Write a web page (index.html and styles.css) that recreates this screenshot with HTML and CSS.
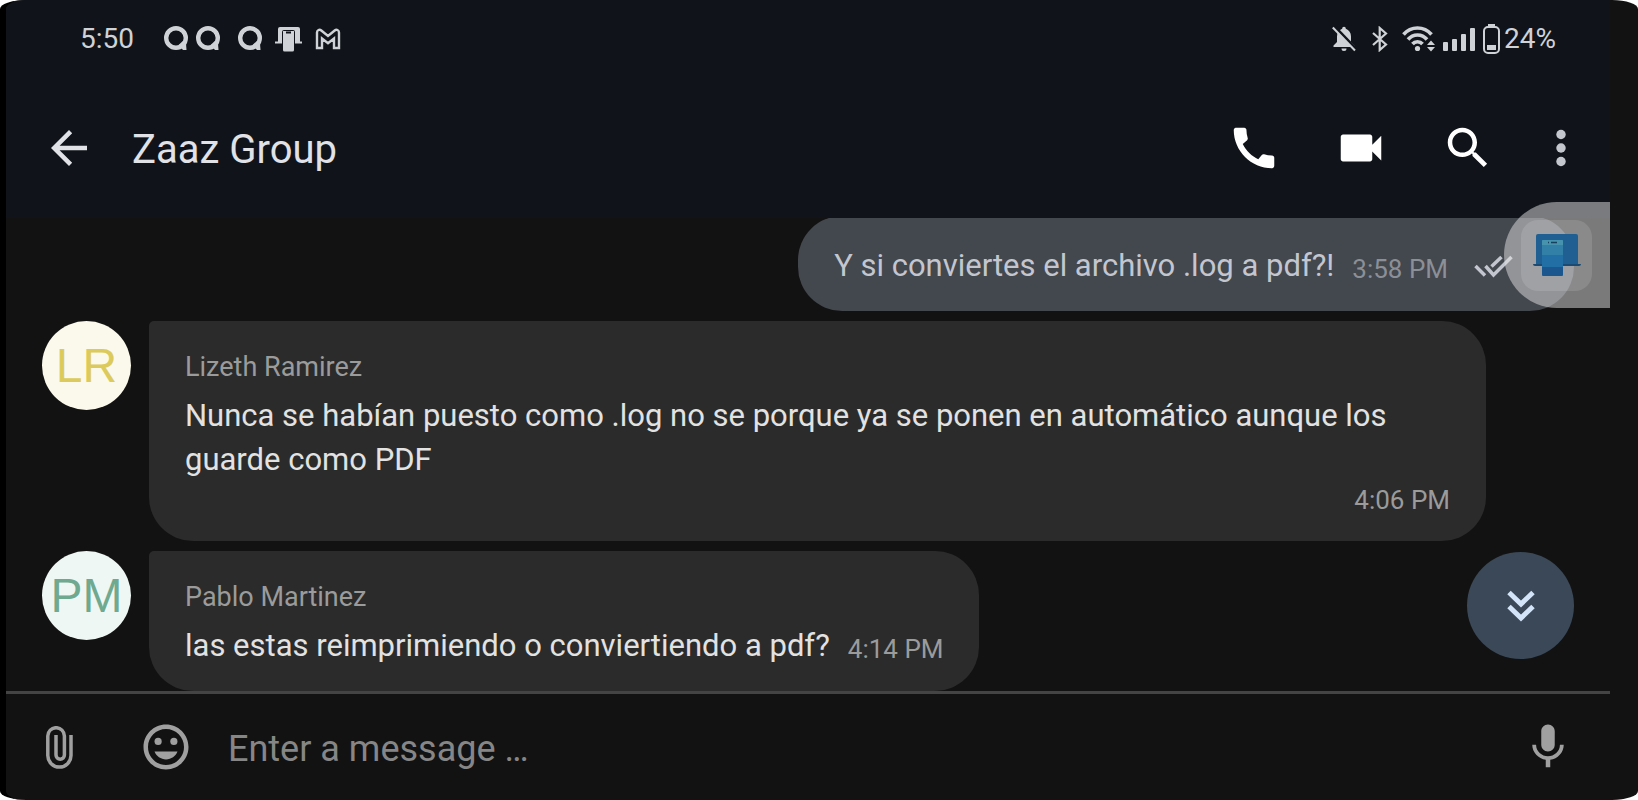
FILE: index.html
```html
<!DOCTYPE html>
<html lang="es">
<head>
    <meta charset="UTF-8">
    <meta name="viewport" content="width=device-width, initial-scale=1.0">
    <title>Zaaz Group</title>
    <link rel="stylesheet" href="styles.css">
</head>
<body>
    <div class="screen">
        <!-- Phone status bar -->
        <div class="status-bar">
            <span class="clock">5:50</span>
            <div class="notifications">
                <svg width="24" height="25" viewBox="0 0 24 25"><circle cx="12" cy="12" r="9.8" fill="none" stroke="currentColor" stroke-width="4.4"/><path d="M14.5 19l5-4.500 2.500 3 .5 6.500h-3.500z" fill="currentColor"/></svg>
                <svg width="24" height="25" viewBox="0 0 24 25"><circle cx="12" cy="12" r="9.8" fill="none" stroke="currentColor" stroke-width="4.4"/><path d="M14.5 19l5-4.500 2.500 3 .5 6.500h-3.500z" fill="currentColor"/></svg>
                <svg class="spaced" width="24" height="25" viewBox="0 0 24 25"><circle cx="12" cy="12" r="9.8" fill="none" stroke="currentColor" stroke-width="4.4"/><path d="M14.5 19l5-4.500 2.500 3 .5 6.500h-3.500z" fill="currentColor"/></svg>
                <svg class="link-icon" width="27" height="26" viewBox="0 0 27 26" fill="currentColor"><path d="M3 3a2 2 0 0 1 2-2h18a2 2 0 0 1 2 2v12.500h2v2h-7V6a2 2 0 0 0-2-2H9a2 2 0 0 0-2 2v11.500H0v-2h3z"/><path d="M8 5h11v19a1.500 1.500 0 0 1-1.500 1.500h-8A1.500 1.500 0 0 1 8 24z"/><path class="notch" d="M11 6.500h5"/></svg>
                <svg class="mail-icon" width="26" height="22" viewBox="0 0 26 22"><path d="M2 20V4.500C2 2 4.500 1 6.300 2.500L13 8l6.700-5.500C21.500 1 24 2 24 4.500V20h-5V10.500l-6 4.800-6-4.800V20z" fill="none" stroke="currentColor" stroke-width="2.4"/></svg>
            </div>
            <div class="system-icons">
                <svg width="24" height="26" viewBox="0 0 24 26"><path d="M12 .8c-1.200 0-1.800.8-1.800 2C7 4 5 6.700 5 10.500V16l-3.500 3.500V21h21v-1.500L19 16v-5.500c0-3.800-2-6.500-5.200-7.700 0-1.200-.6-2-1.800-2z" fill="currentColor"/><path d="M9.500 22.500h5a2.500 2.500 0 0 1-5 0z" fill="currentColor"/><path class="slash-gap" d="M2 0l22 23"/><path d="M.8 1.500L23 24.500" stroke="currentColor" stroke-width="2"/></svg>
                <svg class="bluetooth" width="16" height="26" viewBox="0 0 16 26"><path d="M1 7l13 11.500-6.300 5.500V2L14 7.500 1 19" fill="none" stroke="currentColor" stroke-width="2.200"/></svg>
                <svg class="wifi" width="34" height="26" viewBox="0 0 34 26"><g fill="none" stroke="currentColor" stroke-width="3.600"><path d="M1.500 8.500C9-.2 22-.2 29.500 8.500"/><path d="M6 13.500c5-6 14-6 19 0"/><path d="M10.500 18c2.500-3 7.500-3 10 0"/></g><circle cx="15.500" cy="22.500" r="2.600" fill="currentColor"/><path d="M29 14.500l4 4.500h-8zM29 25.500l4-4.500h-8z" fill="currentColor"/></svg>
                <svg class="signal" width="33" height="24" viewBox="0 0 33 24" fill="currentColor"><rect x="0" y="15" width="5" height="9" rx="1"/><rect x="9" y="12" width="5" height="12" rx="1"/><rect x="18" y="7" width="5" height="17" rx="1"/><rect x="27" y="1" width="5" height="23" rx="1"/></svg>
                <svg class="battery" width="17" height="30" viewBox="0 0 17 30"><rect x="5" y="0" width="7" height="2" fill="currentColor"/><rect x="1" y="3" width="15" height="26" rx="4" fill="none" stroke="currentColor" stroke-width="2"/><rect x="4" y="21" width="9" height="5" fill="currentColor"/></svg>
                <span>24%</span>
            </div>
        </div>

        <header class="app-bar">
            <button type="button" aria-label="Back"><svg class="icon" viewBox="0 0 24 24"><path d="M20 11H7.830l5.590-5.590L12 4l-8 8 8 8 1.410-1.410L7.830 13H20v-2z"/></svg></button>
            <h1>Zaaz Group</h1>
            <div class="actions">
                <button type="button" aria-label="Call"><svg class="icon" viewBox="0 0 24 24"><path d="M20.010 15.380c-1.230 0-2.420-.2-3.530-.56-.35-.12-.74-.03-1.010.24l-1.570 1.970c-2.830-1.350-5.480-3.900-6.890-6.830l1.950-1.660c.27-.28.35-.67.24-1.020-.37-1.110-.56-2.300-.56-3.530 0-.54-.45-.99-.99-.99H4.190C3.650 3 3 3.240 3 3.990 3 13.280 10.730 21 20.010 21c.71 0 .99-.63.99-1.180v-3.450c0-.54-.45-.99-.99-.99z"/></svg></button>
                <button type="button" aria-label="Video call"><svg class="icon" viewBox="0 0 24 24"><path d="M17 10.500V7c0-.55-.45-1-1-1H4c-.55 0-1 .45-1 1v10c0 .55.45 1 1 1h12c.55 0 1-.45 1-1v-3.500l4 4v-11l-4 4z"/></svg></button>
                <button type="button" aria-label="Search"><svg class="icon" viewBox="0 0 24 24"><path d="M15.500 14h-.79l-.28-.27C15.410 12.590 16 11.110 16 9.500 16 5.910 13.090 3 9.500 3S3 5.910 3 9.500 5.910 16 9.500 16c1.610 0 3.090-.59 4.230-1.570l.27.28v.79l5 4.990L20.490 19l-4.990-5zm-6 0C7.010 14 5 11.990 5 9.500S7.010 5 9.500 5 14 7.010 14 9.500 11.990 14 9.500 14z"/></svg></button>
                <button type="button" class="more" aria-label="More options"><svg class="icon" viewBox="0 0 24 24"><circle cx="12" cy="6" r="2.100"/><circle cx="12" cy="12" r="2.100"/><circle cx="12" cy="18" r="2.100"/></svg></button>
            </div>
        </header>

        <main class="chat">
            <div class="message sent">
                <div class="bubble">
                    <div class="line">
                        <p>Y si conviertes el archivo .log a pdf?!</p>
                        <time>3:58 PM</time>
                        <svg class="read" width="40" height="24" viewBox="0 0 40 24" fill="none" stroke="currentColor" stroke-width="3.500"><path d="M1.500 11l9.500 9.500M11.500 11l8 9L37.500 2M17.500 11.500L27.500 2"/></svg>
                    </div>
                </div>
            </div>

            <div class="message">
                <div class="avatar yellow">LR</div>
                <div class="bubble">
                    <div class="name">Lizeth Ramirez</div>
                    <p>Nunca se habían puesto como .log no se porque ya se ponen en automático aunque los guarde como PDF</p>
                    <time>4:06 PM</time>
                </div>
            </div>

            <div class="message">
                <div class="avatar green">PM</div>
                <div class="bubble">
                    <div class="name">Pablo Martinez</div>
                    <div class="line">
                        <p>las estas reimprimiendo o conviertiendo a pdf?</p>
                        <time>4:14 PM</time>
                    </div>
                </div>
            </div>

            <button type="button" class="scroll-down" aria-label="Scroll to bottom">
                <svg width="28" height="32" viewBox="0 0 28 32" fill="none" stroke="currentColor" stroke-width="5"><path d="M2 2.500l12 11.500 12-11.500M2 16.500L14 28l12-11.500"/></svg>
            </button>
        </main>

        <form class="composer">
            <button type="button" class="attach" aria-label="Attach file"><svg width="27" height="43" viewBox="0 0 27 43" fill="none" stroke="currentColor" stroke-width="3.500"><path d="M25 9v20.500a11.600 11.600 0 0 1-23.200 0V10a8.300 8.300 0 0 1 16.600 0v19a4.200 4.200 0 0 1-8.400 0V9"/></svg></button>
            <button type="button" class="emoji" aria-label="Emoji"><svg class="icon" viewBox="0 0 24 24"><path d="M11.990 2C6.470 2 2 6.480 2 12s4.470 10 9.990 10C17.520 22 22 17.520 22 12S17.520 2 11.990 2zM12 20c-4.420 0-8-3.580-8-8s3.580-8 8-8 8 3.580 8 8-3.580 8-8 8z"/><circle cx="15.500" cy="9.500" r="1.600"/><circle cx="8.500" cy="9.500" r="1.600"/><path d="M12 17.500c2.330 0 4.310-1.460 5.110-3.500H6.890c.8 2.040 2.780 3.500 5.110 3.500z"/></svg></button>
            <input type="text" placeholder="Enter a message …" aria-label="Message">
            <button type="button" class="mic" aria-label="Record"><svg class="icon" viewBox="0 0 24 24"><path d="M12 14c1.660 0 2.990-1.340 2.990-3L15 5c0-1.660-1.340-3-3-3S9 3.340 9 5v6c0 1.660 1.340 3 3 3zm5.300-3c0 3-2.540 5.100-5.300 5.100S6.700 14 6.700 11H5c0 3.410 2.720 6.230 6 6.720V21h2v-3.280c3.280-.48 6-3.300 6-6.720h-1.700z"/></svg></button>
        </form>

        <!-- Floating edge shortcut, drawn over the chat -->
        <div class="edge-shortcut">
            <div class="tile">
                <svg width="48" height="44" viewBox="0 0 48 44">
                    <rect x="3" y="1" width="42" height="32" rx="2" fill="#1f5f92"/>
                    <path d="M0 31h48a2 2 0 0 1-2 2H2a2 2 0 0 1-2-2z" fill="#1b4b72"/>
                    <rect x="9" y="7" width="21" height="36" rx="1" fill="#1c568f"/>
                    <path d="M9 8a1 1 0 0 1 1-1h19a1 1 0 0 1 1 1v26H9z" fill="#226fa5"/>
                    <path d="M9 8a1 1 0 0 1 1-1h19a1 1 0 0 1 1 1v14H9z" fill="#327fa8"/>
                    <path d="M9 8a1 1 0 0 1 1-1h19a1 1 0 0 1 1 1v4H9z" fill="#4793ae"/>
                    <path d="M15 9.500h1M18 9.500h6" stroke="#173f5e" stroke-width="1.500"/>
                </svg>
            </div>
        </div>
    </div>
</body>
</html>
```

FILE: styles.css
```css
* {
    box-sizing: border-box;
}
body {
    margin: 0;
    background-color: #ffffff;
    font-family: Roboto, "Liberation Sans", sans-serif;
}
h1, p {
    margin: 0;
    font-weight: normal;
}
button {
    display: flex;
    align-items: center;
    justify-content: center;
    padding: 0;
    border: none;
    background: none;
    color: inherit;
    cursor: pointer;
}
svg {
    display: block;
    flex: none;
}
.icon {
    width: 54px;
    height: 54px;
    fill: currentColor;
}
.screen {
    position: relative;
    display: flex;
    flex-direction: column;
    height: 100vh;
    padding-right: 28px;
    border-left: 6px solid #000000;
    border-radius: 26px / 9px;
    background-color: #121212;
    overflow: hidden;
}

/* Status bar */
.status-bar {
    display: flex;
    align-items: center;
    height: 77px;
    padding: 0 54px 0 74px;
    background-color: #10141a;
    color: #cfd2d6;
    font-size: 28px;
}
.notifications {
    display: flex;
    align-items: center;
    margin-left: 30px;
    gap: 8px;
}
.notifications .spaced {
    margin-left: 10px;
}
.link-icon {
    margin-left: 5px;
}
.link-icon .notch {
    stroke: #10141a;
    stroke-width: 2;
}
.mail-icon {
    margin-left: 5px;
}
.system-icons {
    display: flex;
    align-items: center;
    margin-left: auto;
}
.slash-gap {
    stroke: #10141a;
    stroke-width: 3;
}
.bluetooth {
    margin-left: 16px;
}
.wifi {
    margin-left: 14px;
}
.signal {
    margin-left: 7px;
}
.battery {
    margin: 0 4px 0 7px;
}

/* App bar */
.app-bar {
    display: flex;
    align-items: center;
    height: 141px;
    padding: 0 22px 0 36px;
    background-color: #10141a;
    color: #e0e2e8;
}
.app-bar h1 {
    margin-left: 36px;
    padding-top: 4px;
    font-size: 40px;
    line-height: 48px;
}
.actions {
    display: flex;
    gap: 53px;
    margin-left: auto;
    color: #ffffff;
}
.actions .more {
    margin-left: -14px;
    color: #c4c7ce;
}

/* Messages */
.chat {
    position: relative;
    display: flex;
    flex: 1;
    flex-direction: column;
    justify-content: flex-end;
    gap: 10px;
    min-height: 0;
    padding: 0 36px;
    overflow: hidden;
}
.message {
    display: flex;
    flex: none;
    align-items: flex-start;
    gap: 18px;
    padding-right: 88px;
}
.avatar {
    flex: none;
    width: 89px;
    height: 89px;
    border-radius: 50%;
    font-family: "Liberation Sans", Arial, sans-serif;
    font-size: 48px;
    line-height: 90px;
    text-align: center;
}
.avatar.yellow {
    background-color: #fbf9ec;
    color: #dccb5c;
}
.avatar.green {
    background-color: #eff7f4;
    color: #6fa98f;
}
.bubble {
    padding: 28px 36px 23px;
    border-radius: 5px 44px 44px 44px;
    background-color: #2b2b2b;
    color: #e2e2e2;
    font-size: 31px;
    line-height: 44px;
}
.bubble .name {
    margin-bottom: 9px;
    color: #9b9b9b;
    font-size: 27px;
    line-height: 36px;
}
.bubble time {
    display: block;
    color: #9b9b9b;
    font-size: 26px;
    line-height: 36px;
    text-align: right;
}
.line {
    display: flex;
    align-items: flex-end;
    gap: 18px;
}
.line time {
    padding-bottom: 1px;
}
.sent {
    justify-content: flex-end;
    padding-right: 0;
}
.sent .bubble {
    padding-right: 60px;
    border-radius: 44px;
    background-color: #43474e;
    color: #c3c6cf;
}
.sent time {
    color: #8b8f97;
}
.read {
    margin: 0 0 9px 8px;
}
.scroll-down {
    position: absolute;
    right: 36px;
    bottom: 32px;
    width: 107px;
    height: 107px;
    border-radius: 50%;
    background-color: #3a4857;
    color: #d3e4f8;
}

/* Message box */
.composer {
    display: flex;
    align-items: center;
    height: 109px;
    padding: 0 35px 0 40px;
    border-top: 3px solid #444444;
    color: #a0a0a0;
}
.composer .emoji {
    margin-left: 66px;
}
.composer input {
    flex: 1;
    min-width: 0;
    margin: 0 34px 0 35px;
    padding: 4px 0 0;
    border: none;
    outline: none;
    background: none;
    color: #e2e2e2;
    font-family: inherit;
    font-size: 36px;
}
.composer input::placeholder {
    color: #868686;
    opacity: 1;
}

/* Edge shortcut */
.edge-shortcut {
    position: absolute;
    top: 202px;
    right: 28px;
    display: flex;
    align-items: center;
    width: 106px;
    height: 106px;
    padding-left: 17px;
    border-radius: 53px 0 0 53px;
    background-color: rgba(225, 225, 225, 0.5);
}
.tile {
    display: flex;
    align-items: center;
    justify-content: center;
    width: 71px;
    height: 71px;
    border-radius: 17px;
    background-color: rgba(255, 255, 255, 0.12);
}
```
